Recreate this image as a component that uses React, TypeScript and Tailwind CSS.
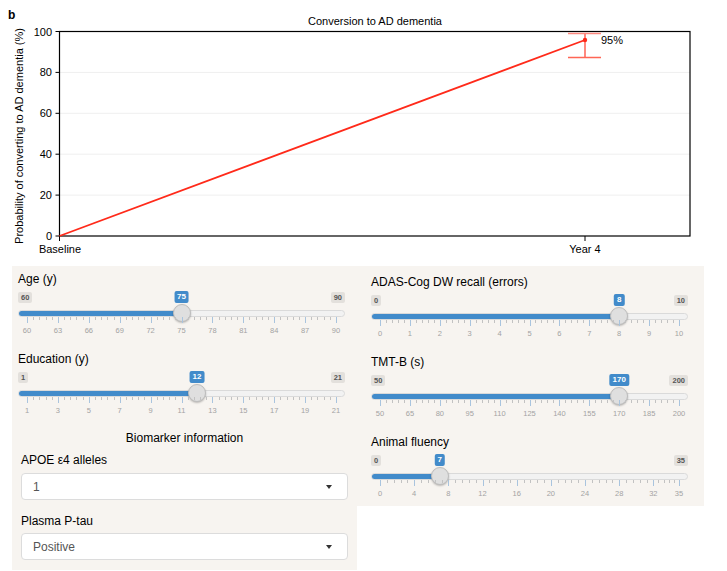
import React from "react";

type SliderProps = {
  label: string;
  min: number;
  max: number;
  value: number;
  grid: number[];
};

const Y_LEVELS = [0, 20, 40, 60, 80, 100];

// plot box in px
const PX0 = 59.5;
const PX1 = 690;
const PY0 = 236;
const PY1 = 31.5;
const yOf = (v: number) => PY0 - (v / 100) * (PY0 - PY1);

function Chart() {
  const xYear = 585;
  return (
    <svg width={727} height={266} className="block">
      <text x={8} y={19} fontSize={12} fontWeight="bold">
        b
      </text>
      <text x={375} y={25} fontSize={11} textAnchor="middle">
        Conversion to AD dementia
      </text>

      {Y_LEVELS.slice(1, -1).map((v) => (
        <line key={v} x1={PX0} x2={PX1} y1={yOf(v)} y2={yOf(v)} stroke="#efefef" strokeWidth={1} />
      ))}

      <rect x={PX0} y={PY1} width={PX1 - PX0} height={PY0 - PY1} fill="none" stroke="#000" strokeWidth={1.2} />

      {Y_LEVELS.map((v) => (
        <g key={v}>
          <line x1={PX0 - 4} x2={PX0} y1={yOf(v)} y2={yOf(v)} stroke="#000" strokeWidth={1} />
          <text x={52} y={yOf(v) + 4} fontSize={11} textAnchor="end">
            {v}
          </text>
        </g>
      ))}

      <text transform="translate(23 136) rotate(-90)" fontSize={11} textAnchor="middle">
        Probability of converting to AD dementia (%)
      </text>

      <line x1={PX0} x2={PX0} y1={PY0} y2={PY0 + 5} stroke="#000" />
      <line x1={xYear} x2={xYear} y1={PY0} y2={PY0 + 5} stroke="#000" />
      <text x={60} y={253} fontSize={11} textAnchor="middle">
        Baseline
      </text>
      <text x={xYear} y={253} fontSize={11} textAnchor="middle">
        Year 4
      </text>

      {/* trend line */}
      <line x1={PX0} y1={PY0} x2={xYear} y2={40} stroke="#ff2a1a" strokeWidth={1.8} />

      {/* error bar */}
      <line x1={xYear} x2={xYear} y1={33.5} y2={57.5} stroke="#ff3b2b" strokeWidth={1.2} />
      <line x1={568} x2={601} y1={33.5} y2={33.5} stroke="#ff8a80" strokeWidth={1.5} />
      <line x1={568} x2={601} y1={57.5} y2={57.5} stroke="#ff6655" strokeWidth={1.5} />
      <circle cx={xYear} cy={40} r={2.2} fill="#ff2a1a" />
      <text x={601} y={44} fontSize={11}>
        95%
      </text>
    </svg>
  );
}

// x of a value along the track: 9px inset on each side
const along = (p: number) => `calc(9px + (100% - 18px) * ${p / 100})`;

function Slider({ label, min, max, value, grid }: SliderProps) {
  const pos = (v: number) => ((v - min) / (max - min)) * 100;
  const minor: number[] = [];
  for (let i = 0; i < grid.length - 1; i++) {
    const a = pos(grid[i]);
    const b = pos(grid[i + 1]);
    for (let k = 1; k < 5; k++) minor.push(a + ((b - a) * k) / 5);
  }
  const p = pos(value);

  return (
    <div className="mb-[15px] flex flex-col last:mb-0">
      <div className="text-[12px] leading-[18px] text-black">{label}</div>

      <div className="relative mt-[4px] flex h-[11px] justify-between">
        <span className="rounded-[2px] bg-[#e3e0dc] px-[3px] text-[7.5px] font-bold leading-[11px] text-[#555]">
          {min}
        </span>
        <span
          className="absolute top-[-1px] -translate-x-1/2 rounded-[2px] bg-[#428bca] px-[3px] text-[8px] font-bold leading-[12px] text-white"
          style={{ left: along(p) }}
        >
          {value}
        </span>
        <span className="rounded-[2px] bg-[#e3e0dc] px-[3px] text-[7.5px] font-bold leading-[11px] text-[#555]">
          {max}
        </span>
      </div>

      <div className="relative mt-[7px] h-[7px] rounded-full border border-[#dadada] bg-[#f2f2f2]">
        <div className="h-full rounded-l-full bg-[#428bca]" style={{ width: along(p) }} />
        <div
          className="absolute top-[-7px] h-[18px] w-[18px] -translate-x-1/2 rounded-full border border-[#bdbdbd] bg-[#dfdfdf] shadow-[0_1px_2px_rgba(0,0,0,0.25)]"
          style={{ left: along(p) }}
        />
      </div>

      <div className="relative mx-[9px] h-[6px]">
        {minor.map((m, i) => (
          <div key={"m" + i} className="absolute top-0 h-[3px] w-px bg-[#c2c2c2]" style={{ left: `${m}%` }} />
        ))}
        {grid.map((g) => (
          <div key={g} className="absolute top-0 h-[6px] w-px bg-[#a9c4de]" style={{ left: `${pos(g)}%` }} />
        ))}
      </div>

      <div className="relative mx-[9px] mt-[3px] h-[9px]">
        {grid.map((g) => (
          <span
            key={g}
            className="absolute top-0 -translate-x-1/2 text-[7.5px] leading-[9px] text-[#a3a3a3]"
            style={{ left: `${pos(g)}%` }}
          >
            {g}
          </span>
        ))}
      </div>
    </div>
  );
}

function Select({ value }: { value: string }) {
  return (
    <div className="flex h-[27px] items-center justify-between rounded-[4px] border border-[#dcdcdc] bg-white pl-[11px] pr-[15px] text-[12px] text-[#555]">
      <span>{value}</span>
      <span className="h-0 w-0 border-x-[3.5px] border-t-[4px] border-x-transparent border-t-[#333]" />
    </div>
  );
}

const range = (a: number, b: number, s: number) => {
  const out: number[] = [];
  for (let v = a; v <= b; v += s) out.push(v);
  return out;
};

export default function App() {
  return (
    <div className="h-[571px] w-[727px] bg-white font-['Liberation_Sans',Arial,sans-serif] text-black">
      <Chart />
      <div className="ml-[12px] flex items-start">
        <div className="flex w-[345px] flex-col bg-[#f7f4f0] pb-[10px] pl-[6px] pr-[12px] pt-[4px]">
          <Slider label="Age (y)" min={60} max={90} value={75} grid={range(60, 90, 3)} />
          <Slider label="Education (y)" min={1} max={21} value={12} grid={range(1, 21, 2)} />
          <div className="ml-[3px] mr-[-3px] flex flex-col">
            <div className="text-center text-[12px] leading-[16px]">Biomarker information</div>
            <div className="mt-[6px] text-[12px] leading-[16px]">APOE ε4 alleles</div>
            <div className="mt-[5px]">
              <Select value="1" />
            </div>
            <div className="mt-[13px] text-[12px] leading-[16px]">Plasma P-tau</div>
            <div className="mt-[4px]">
              <Select value="Positive" />
            </div>
          </div>
        </div>
        <div className="flex w-[347px] flex-col bg-[#f7f4f0] pb-[8px] pl-[14px] pr-[16px] pt-[7px]">
          <Slider label="ADAS-Cog DW recall (errors)" min={0} max={10} value={8} grid={range(0, 10, 1)} />
          <Slider label="TMT-B (s)" min={50} max={200} value={170} grid={range(50, 200, 15)} />
          <Slider label="Animal fluency" min={0} max={35} value={7} grid={[...range(0, 32, 4), 35]} />
        </div>
      </div>
    </div>
  );
}
